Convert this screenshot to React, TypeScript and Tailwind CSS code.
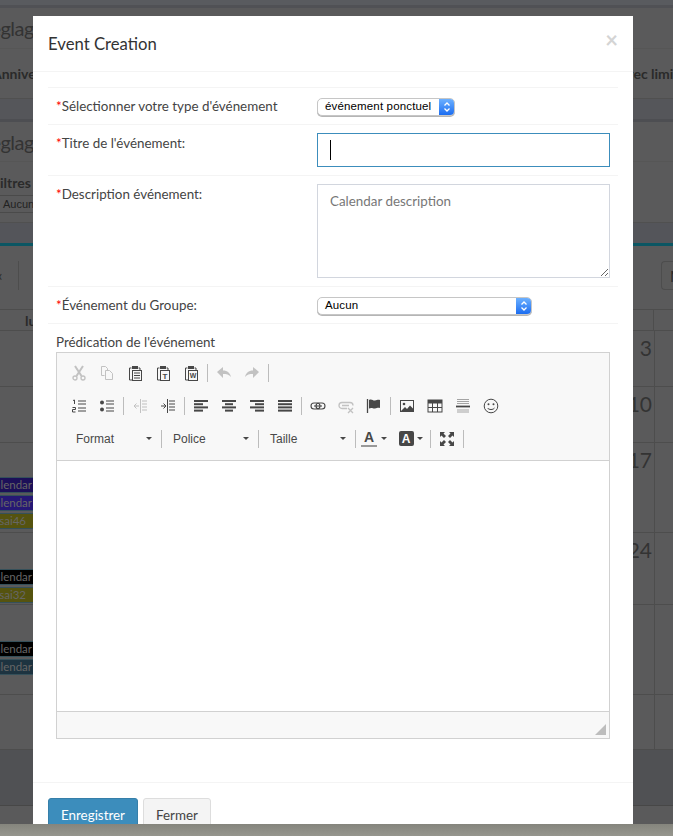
import type { ReactNode } from "react";

const INK = "#474747";

function Icon({ children, dim }: { children: ReactNode; dim?: boolean }) {
  return (
    <svg viewBox="0 0 16 16" className={`h-4 w-4 ${dim ? "opacity-30" : ""}`} fill="none" stroke={INK}>
      {children}
    </svg>
  );
}

function Clipboard({ children }: { children: ReactNode }) {
  return (
    <Icon>
      <path d="M4.5 3H2.5v12H5" strokeWidth="1" />
      <path d="M11.5 3h1.5v2" strokeWidth="1" />
      <rect x="5" y="1" width="6" height="3" fill={INK} stroke="none" />
      <rect x="5.5" y="5.5" width="9" height="10" strokeWidth="1" />
      {children}
    </Icon>
  );
}

function Bars({ rows }: { rows: [number, number][] }) {
  return (
    <Icon>
      {rows.map(([x, w], i) => (
        <rect key={i} x={x} y={2 + i * 3.2} width={w} height="2" fill={INK} stroke="none" />
      ))}
    </Icon>
  );
}

const icons: Record<string, ReactNode> = {
  cut: (
    <Icon dim>
      <path d="M4 1l6.5 10M12 1L5.500 11" strokeWidth="2" />
      <circle cx="4" cy="13" r="2" strokeWidth="1.300" />
      <circle cx="12" cy="13" r="2" strokeWidth="1.300" />
    </Icon>
  ),
  copy: (
    <Icon dim>
      <path d="M5.500 10.500H2.500v-9h4l2 2v2M6.500 5.500h4l3 3v6h-7z" strokeWidth="1" />
    </Icon>
  ),
  paste: (
    <Clipboard>
      <path d="M7 8h6M7 10.500h6M7 13h6" strokeWidth="1" />
    </Clipboard>
  ),
  pasteText: (
    <Clipboard>
      <text x="10" y="13.500" textAnchor="middle" fontSize="8" fontWeight="700" fontFamily="Liberation Sans" fill={INK} stroke="none">
        T
      </text>
    </Clipboard>
  ),
  pasteWord: (
    <Clipboard>
      <text x="10" y="13" textAnchor="middle" fontSize="7" fontWeight="700" fontFamily="Liberation Sans" fill={INK} stroke="none">
        W
      </text>
    </Clipboard>
  ),
  undo: (
    <Icon dim>
      <path d="M1 7l6-5v3.500c4.500 0 7 2.500 8 6.500-2-2.500-4.500-3-8-3V13z" fill={INK} stroke="none" />
    </Icon>
  ),
  redo: (
    <Icon dim>
      <path d="M15 7L9 2v3.500C4.500 5.500 2 8 1 12c2-2.500 4.500-3 8-3V13z" fill={INK} stroke="none" />
    </Icon>
  ),
  numbered: (
    <Icon>
      <path d="M2 2.500L3.500 2v4M1.500 9.500h3v2h-3v2.500h3M7 3h8M7 6h8M7 10h8M7 13h8" strokeWidth="1" />
    </Icon>
  ),
  bulleted: (
    <Icon>
      <circle cx="3" cy="4.500" r="2" fill={INK} stroke="none" />
      <circle cx="3" cy="11.500" r="2" fill={INK} stroke="none" />
      <path d="M7 3h8M7 6h8M7 10h8M7 13h8" strokeWidth="1" />
    </Icon>
  ),
  outdent: (
    <Icon dim>
      <path d="M8.500 1v14" strokeWidth="1" />
      <path d="M10 3h5M10 6h5M10 9h5M10 12h5M7 8H2M4.500 5.500L2 8l2.500 2.500" strokeWidth="1" />
    </Icon>
  ),
  indent: (
    <Icon>
      <path d="M7.500 1v14" strokeWidth="1" />
      <path d="M9 3h6M9 6h6M9 9h6M9 12h6M1 8h5M3.500 5.500L6 8l-2.500 2.500" strokeWidth="1" />
    </Icon>
  ),
  alignLeft: <Bars rows={[[1, 14], [1, 9], [1, 14], [1, 9]]} />,
  alignCenter: <Bars rows={[[1, 14], [4, 8], [1, 14], [4, 8]]} />,
  alignRight: <Bars rows={[[1, 14], [6, 9], [1, 14], [6, 9]]} />,
  justify: <Bars rows={[[1, 14], [1, 14], [1, 14], [1, 14]]} />,
  link: (
    <Icon>
      <rect x="1" y="5" width="9" height="6" rx="3" strokeWidth="1.100" />
      <rect x="6" y="5" width="9" height="6" rx="3" strokeWidth="1.100" />
      <path d="M4 8h8" strokeWidth="1.100" />
    </Icon>
  ),
  unlink: (
    <Icon dim>
      <path d="M9 10.500H4a3 3 0 010-6h8a3 3 0 013 3" strokeWidth="1.300" />
      <path d="M4 7.500h7M10 10l5 5M15 10l-5 5" strokeWidth="1.300" />
    </Icon>
  ),
  flag: (
    <Icon>
      <path d="M1.500 1v14" strokeWidth="1.300" />
      <path d="M3 2c3-1.500 4 1 6 .5s3-1 5-.5v8c-2-.5-3 0-5 .5s-3-1.500-6 0z" fill={INK} stroke="none" />
    </Icon>
  ),
  image: (
    <Icon>
      <rect x="1.500" y="2.500" width="13" height="11" strokeWidth="1" />
      <circle cx="5" cy="6" r="1.300" fill={INK} stroke="none" />
      <path d="M2 13l4-4 2 2 3-3.500 3 3V13z" fill={INK} stroke="none" />
    </Icon>
  ),
  table: (
    <Icon>
      <rect x="1" y="2" width="14" height="12" strokeWidth="1" />
      <rect x="1" y="2" width="14" height="3.500" fill={INK} stroke="none" />
      <path d="M5.500 5v9M10.500 5v9M1 9.500h14" strokeWidth="1" />
    </Icon>
  ),
  hr: (
    <Icon>
      <path d="M2 1.500h12M2 3.500h12M2 5.500h12M2 12h12M2 14h12" strokeWidth=".8" opacity=".6" />
      <path d="M1 8.500h14" strokeWidth="1.800" />
    </Icon>
  ),
  smiley: (
    <Icon>
      <circle cx="8" cy="8" r="6.800" strokeWidth="1" />
      <circle cx="5.500" cy="6.300" r="1" fill={INK} stroke="none" />
      <circle cx="10.500" cy="6.300" r="1" fill={INK} stroke="none" />
      <path d="M4.500 10c1.500 2 5.500 2 7 0" strokeWidth="1" />
    </Icon>
  ),
  maximize: (
    <Icon>
      <path d="M1 1h5L4.500 2.500 7 5 5 7 2.500 4.500 1 6zM15 1v5l-1.500-1.500L11 7 9 5l2.500-2.500L10 1zM1 15v-5l1.500 1.500L5 9l2 2-2.500 2.500L6 15zM15 15h-5l1.500-1.500L9 11l2-2 2.500 2.500L15 10z" fill={INK} stroke="none" />
    </Icon>
  ),
};

function Btn({ name }: { name: string }) {
  return <div className="flex h-[18px] w-7 items-center justify-center">{icons[name]}</div>;
}

function Sep() {
  return <div className="mx-0.5 h-[18px] w-px bg-[#bcbcbc]" />;
}

function Caret() {
  return <div className="h-0 w-0 border-x-[3.500px] border-t-[3px] border-x-transparent border-t-[#474747]" />;
}

function Combo({ label, width, pad }: { label: string; width: string; pad: string }) {
  return (
    <div className={`flex h-[18px] items-center justify-between pr-[7px] font-['Liberation_Sans',sans-serif] text-xs text-[#484848] ${width} ${pad}`}>
      <span>{label}</span>
      <Caret />
    </div>
  );
}

function ToolRow({ children }: { children: ReactNode }) {
  return <div className="flex h-[33px] items-center">{children}</div>;
}

function Toolbar() {
  return (
    <div className="border-b border-[#d1d1d1] bg-[#f8f8f8] pl-2 pt-[3px] pb-[5px]">
      <ToolRow>
        <Btn name="cut" />
        <Btn name="copy" />
        <Btn name="paste" />
        <Btn name="pasteText" />
        <Btn name="pasteWord" />
        <Sep />
        <Btn name="undo" />
        <Btn name="redo" />
        <Sep />
      </ToolRow>
      <ToolRow>
        <Btn name="numbered" />
        <Btn name="bulleted" />
        <Sep />
        <Btn name="outdent" />
        <Btn name="indent" />
        <Sep />
        <Btn name="alignLeft" />
        <Btn name="alignCenter" />
        <Btn name="alignRight" />
        <Btn name="justify" />
        <Sep />
        <Btn name="link" />
        <Btn name="unlink" />
        <Btn name="flag" />
        <Sep />
        <Btn name="image" />
        <Btn name="table" />
        <Btn name="hr" />
        <Btn name="smiley" />
      </ToolRow>
      <ToolRow>
        <Combo label="Format" width="w-[94px]" pad="pl-[11px]" />
        <Sep />
        <Combo label="Police" width="w-[92px]" pad="pl-[9px]" />
        <Sep />
        <Combo label="Taille" width="w-[92px]" pad="pl-[9px]" />
        <Sep />
        <div className="flex h-[18px] w-[32px] items-center justify-center gap-1">
          <span className="border-b-2 border-[#999] px-[3px] font-['Liberation_Sans',sans-serif] text-[14px] font-bold leading-[15px] text-[#474747]">A</span>
          <Caret />
        </div>
        <div className="flex h-[18px] w-[38px] items-center justify-center gap-[3px] pl-[3px]">
          <span className="flex h-[15px] w-[15px] items-center justify-center rounded-[2px] bg-[#474747] font-['Liberation_Sans',sans-serif] text-[12px] font-bold text-white">A</span>
          <Caret />
        </div>
        <Sep />
        <Btn name="maximize" />
        <Sep />
      </ToolRow>
    </div>
  );
}

function MacSelect({ value, width }: { value: string; width: string }) {
  return (
    <div className={`mt-0.5 flex h-[18px] items-center justify-between overflow-hidden rounded-[5px] border border-[#c6c6c6] bg-white font-['Liberation_Sans',sans-serif] text-[11.500px] text-black shadow-[0_1px_0_#b5b5b5] ${width}`}>
      <span className="pl-[7px] tracking-[.15px]">{value}</span>
      <div className="flex h-full w-[15px] items-center justify-center bg-gradient-to-b from-[#6cb0ff] to-[#1a6cf0]">
        <svg viewBox="0 0 8 12" className="h-3 w-2" fill="none" stroke="white" strokeWidth="1.300">
          <path d="M1.500 4.500L4 2l2.500 2.500M1.500 7.500L4 10l2.500-2.500" />
        </svg>
      </div>
    </div>
  );
}

function FormRow({ label, children }: { label: string; children: ReactNode }) {
  return (
    <div className="grid grid-cols-[269px_1fr] border-t border-[#f4f4f4] pt-2 pb-2">
      <div className="px-2 leading-5">
        <span className="text-[#f00]">*</span>
        {label}
      </div>
      <div className="pr-2">{children}</div>
    </div>
  );
}

function Modal() {
  return (
    <div className="absolute left-[33px] top-4 bottom-0 w-[600px] overflow-hidden bg-white text-[13.400px] text-[#444]">
      <div className="flex h-14 items-start justify-between border-b border-[#f4f4f4] px-[15px] pt-[17px]">
        <h4 className="text-[16.700px] leading-[22px] text-[#333]">Event Creation</h4>
        <span className="-mt-[3px] text-[22px] font-bold leading-5 text-[#d4d4d4]">×</span>
      </div>
      <div className="px-[15px] pt-[15px]">
        <FormRow label="Sélectionner votre type d'événement">
          <MacSelect value="événement ponctuel" width="w-[138px]" />
        </FormRow>
        <FormRow label="Titre de l'événement:">
          <div className="flex h-[34px] items-center border border-[#3c8dbc] pl-3">
            <div className="h-5 w-px bg-black" />
          </div>
        </FormRow>
        <FormRow label="Description événement:">
          <textarea
            placeholder="Calendar description"
            className="block h-[94px] w-full border border-[#d2d6de] px-3 py-1.5 leading-5 outline-none placeholder:text-[#777]"
          />
        </FormRow>
        <FormRow label="Événement du Groupe:">
          <MacSelect value="Aucun" width="w-[215px]" />
        </FormRow>
        <div className="border-t border-[#f4f4f4] px-2 pt-[8px] leading-5">Prédication de l'événement</div>
        <div className="mx-2 border border-[#d1d1d1]">
          <Toolbar />
          <div className="h-[250px] bg-white" />
          <div className="flex h-[27px] items-end justify-end border-t border-[#d1d1d1] bg-[#f8f8f8] p-[3px]">
            <svg viewBox="0 0 10 10" className="h-[11px] w-[11px]">
              <path d="M10 0v10H0z" fill="#bdbdbd" />
            </svg>
          </div>
        </div>
      </div>
      <div className="mt-[43px] flex gap-[5px] border-t border-[#f4f4f4] px-[15px] pt-[15px]">
        <button className="h-[34px] w-[90px] rounded-[3px] border border-[#367fa9] bg-[#3c8dbc] text-white">Enregistrer</button>
        <button className="h-[34px] w-[68px] rounded-[3px] border border-[#ddd] bg-[#f4f4f4] text-[#444]">Fermer</button>
      </div>
    </div>
  );
}

function Chip({ text, color, right }: { text: string; color: string; right: string }) {
  return (
    <div className={`mb-0.5 flex h-4 w-10 justify-end overflow-hidden border-y border-[#35505a] text-[11.500px] leading-[14px] text-[#666] ${color} ${right}`}>
      <span>{text}</span>
    </div>
  );
}

function CalRow({ h, pad, day, children }: { h: string; pad: string; day?: string; children?: ReactNode }) {
  return (
    <div className={`flex border-b border-[#4d4d4d] ${h}`}>
      <div className={`flex-1 ${pad}`}>{children}</div>
      <div className="pr-0.5 pt-[3px] text-[21px] font-normal leading-7 text-[#333]">{day}</div>
      <div className="w-[19px] border-l border-[#4d4d4d]" />
    </div>
  );
}

function Backdrop() {
  return (
    <div className="text-[#2a2a2a]">
      <div className="h-[5px] bg-[#595b5f]" />
      <div className="h-[3px] bg-[#505155]" />
      <div className="h-[41px] overflow-hidden whitespace-nowrap border-b border-[#565656] pt-[2px] text-[20px] leading-9 tracking-[-.5px] text-[#333]">
        <span className="-ml-[21px] inline-block">Réglages</span>
      </div>
      <div className="flex h-[50px] items-center justify-between overflow-hidden whitespace-nowrap border-b border-[#505050] text-[14px] font-bold">
        <span className="-ml-[8px]">Anniversaire</span>
        <span className="-mr-[13px]">avec limite</span>
      </div>
      <div className="h-[20px] bg-[#55565a]" />
      <div className="h-[3px] bg-[#4d4e52]" />
      <div className="h-[40px] overflow-hidden whitespace-nowrap border-b border-[#565656] pt-[2px] text-[20px] leading-9 tracking-[-.5px] text-[#333]">
        <span className="-ml-[21px] inline-block">Réglages</span>
      </div>
      <div className="h-[61px] overflow-hidden whitespace-nowrap border-b border-[#505050] pt-[11px]">
        <div className="-ml-[8px] text-[14px] font-bold leading-5">Filtres</div>
        <div className="-ml-[5px] mt-[2px] w-[50px] rounded-sm border border-[#4a4a4a] pl-[7px] font-['Liberation_Sans',sans-serif] text-[11px] leading-[16px] text-[#222]">Aucun</div>
      </div>
      <div className="h-5 bg-[#54555a]" />
      <div className="h-[3px] bg-[#0b5663]" />
      <div className="flex h-[63px] items-start justify-between pt-[15px]">
        <div className="h-[29px] w-[19px] overflow-hidden border-r border-[#4d4d4d] text-[15px] leading-7">
          <span className="-ml-[4px] inline-block">«</span>
        </div>
        <div className="h-[29px] w-[12px] overflow-hidden rounded-l border border-r-0 border-[#4d4d4d] bg-[#5a5a5a] pl-2 text-[15px] leading-7">M</div>
      </div>
      <div className="relative flex h-[22px] items-center border-y border-[#4d4d4d]">
        <span className="ml-[25px] text-[14px] font-bold">lun.</span>
        <div className="absolute bottom-0 right-[19px] top-0 border-l border-[#4d4d4d]" />
      </div>
      <CalRow h="h-[56px]" pad="" day="3" />
      <CalRow h="h-[56px]" pad="" day="10" />
      <CalRow h="h-[90px]" pad="pt-[34px]" day="17">
        <Chip text="Calendar" color="bg-[#1c1058]" right="pr-[8px]" />
        <Chip text="Calendar" color="bg-[#261875]" right="pr-[8px]" />
        <Chip text="Essai46" color="bg-[#55530f]" right="pr-[14px]" />
      </CalRow>
      <CalRow h="h-[72px]" pad="pt-[36px]" day="24">
        <Chip text="Calendar" color="bg-black" right="pr-[8px]" />
        <Chip text="Essai32" color="bg-[#55530f]" right="pr-[14px]" />
      </CalRow>
      <CalRow h="h-[90px]" pad="pt-[36px]">
        <Chip text="Calendar" color="bg-black" right="pr-[8px]" />
        <Chip text="Calendar" color="bg-[#1d3340]" right="pr-[8px]" />
      </CalRow>
      <CalRow h="h-[55px]" pad="" />
      <div className="h-[56px] border-b border-[#474747] bg-[#505154]" />
    </div>
  );
}

export default function App() {
  return (
    <div className="flex h-[836px] w-[673px] flex-col overflow-hidden font-['Lato',sans-serif]">
      <div className="relative flex-1 overflow-hidden bg-[#5a5a5b]">
        <Backdrop />
        <Modal />
      </div>
      <div className="h-3 bg-gradient-to-b from-[#85857d] to-[#96968e]" />
    </div>
  );
}
